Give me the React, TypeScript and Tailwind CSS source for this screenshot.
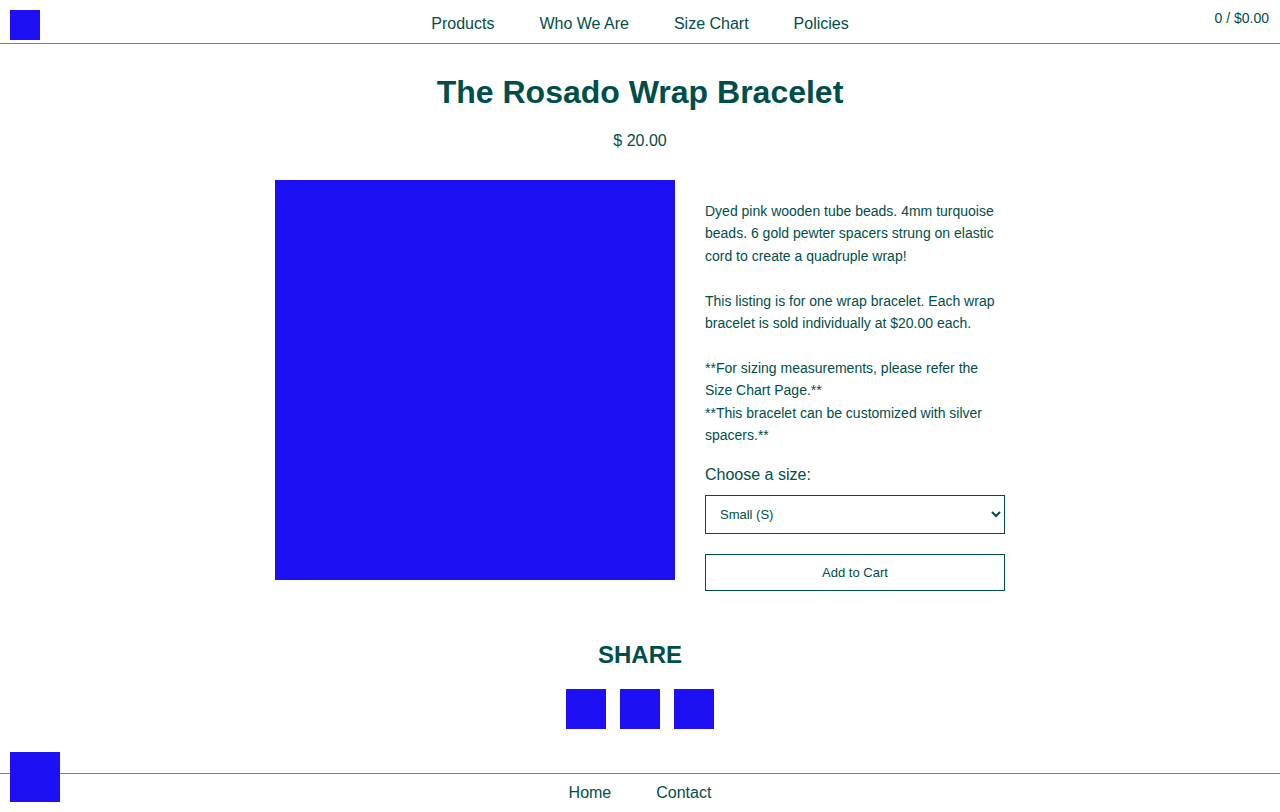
import React from 'react';

const NAV_LINKS = ['Products', 'Who We Are', 'Size Chart', 'Policies'];
const FOOTER_LINKS = ['Home', 'Contact'];

const App: React.FC = () => {
  return (
    <div className="min-h-screen flex flex-col bg-white text-[#004e4a] font-['Liberation_Sans',Arial,sans-serif]">
      {/* Header */}
      <header className="relative h-[44px] border-b border-[#22a3a3] flex items-center justify-center">
        <div className="absolute left-[10px] top-[10px] w-[30px] h-[30px] bg-[#1e10f5]" />
        <nav className="flex gap-[45px] text-[16px] leading-[18px] pt-[4px]">
          {NAV_LINKS.map((link) => (
            <a key={link} href="#">
              {link}
            </a>
          ))}
        </nav>
        <div className="absolute right-[11px] top-[10px] text-[14px] leading-[16px]">0 / $0.00</div>
      </header>

      {/* Product */}
      <main className="flex-1 flex flex-col items-center">
        <h1 className="mt-[30px] text-[32px] leading-[37px] font-bold">The Rosado Wrap Bracelet</h1>
        <p className="mt-[21px] text-[16px] leading-[18px]">$ 20.00</p>

        <div className="mt-[30px] flex gap-[30px]">
          <div className="w-[400px] h-[400px] bg-[#1e10f5]" />
          <div className="w-[300px] pt-[20px]">
            <p className="text-[14px] leading-[22.4px]">
              Dyed pink wooden tube beads. 4mm turquoise beads. 6 gold pewter spacers strung on elastic cord to
              create a quadruple wrap!
              <br />
              <br />
              This listing is for one wrap bracelet. Each wrap bracelet is sold individually at $20.00 each.
              <br />
              <br />
              **For sizing measurements, please refer the Size Chart Page.**
              <br />
              **This bracelet can be customized with silver spacers.**
            </p>
            <label className="block mt-[20px] text-[16px] leading-[18px]">Choose a size:</label>
            <select className="mt-[11px] w-full h-[39px] border border-[#004e4a] bg-white pl-[10px] pr-[6px] text-[13px] text-[#004e4a]">
              <option>Small (S)</option>
              <option>Medium (M)</option>
              <option>Large (L)</option>
            </select>
            <button className="mt-[20px] w-full h-[37px] border border-[#004e4a] bg-white text-[13px] text-[#004e4a]">
              Add to Cart
            </button>
          </div>
        </div>

        <h2 className="mt-[50px] text-[24px] leading-[28px] font-bold">SHARE</h2>
        <div className="mt-[20px] flex gap-[14px]">
          <div className="w-[40px] h-[40px] bg-[#1e10f5]" />
          <div className="w-[40px] h-[40px] bg-[#1e10f5]" />
          <div className="w-[40px] h-[40px] bg-[#1e10f5]" />
        </div>
      </main>

      {/* Footer */}
      <footer className="relative mt-[43px] border-t border-[#22a3a3] h-[39px] flex justify-center pt-[10px]">
        <div className="absolute left-[10px] top-[-22px] w-[50px] h-[50px] bg-[#1e10f5]" />
        <nav className="flex gap-[45px] text-[16px] leading-[18px]">
          {FOOTER_LINKS.map((link) => (
            <a key={link} href="#">
              {link}
            </a>
          ))}
        </nav>
      </footer>
    </div>
  );
};

export default App;
